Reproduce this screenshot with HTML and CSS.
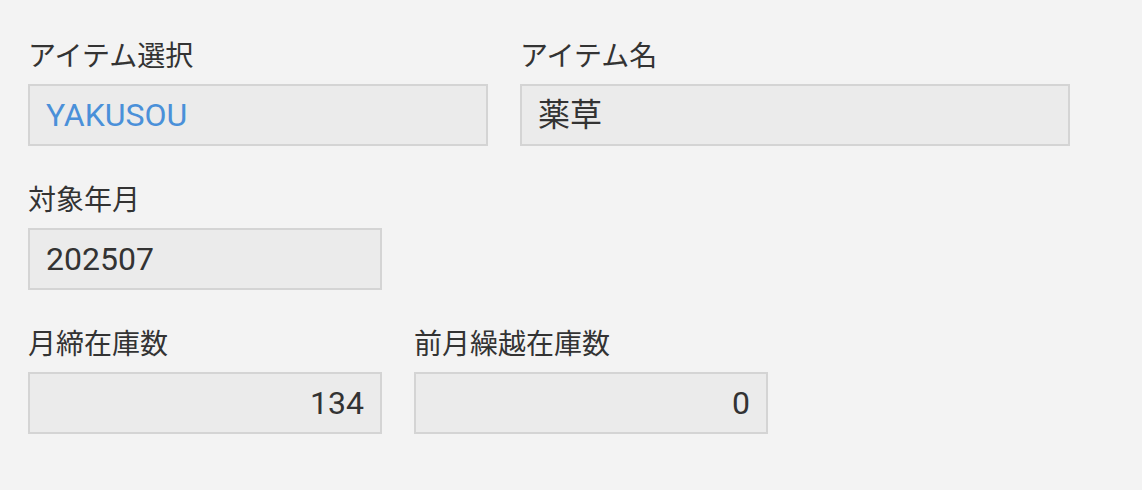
FILE: index.html
```html
<!DOCTYPE html>
<html lang="ja">
<head>
    <meta charset="UTF-8">
    <meta name="viewport" content="width=device-width, initial-scale=1.0">
    <title>在庫詳細</title>
    <link rel="stylesheet" href="styles.css">
</head>
<body>
    <div class="form">
        <div class="form-row">
            <div class="form-group w-select">
                <div class="form-label">アイテム選択</div>
                <div class="form-value link">YAKUSOU</div>
            </div>
            <div class="form-group w-name">
                <div class="form-label">アイテム名</div>
                <div class="form-value">薬草</div>
            </div>
        </div>

        <div class="form-row">
            <div class="form-group w-short">
                <div class="form-label">対象年月</div>
                <div class="form-value">202507</div>
            </div>
        </div>

        <div class="form-row">
            <div class="form-group w-short">
                <div class="form-label">月締在庫数</div>
                <div class="form-value number">134</div>
            </div>
            <div class="form-group w-short">
                <div class="form-label">前月繰越在庫数</div>
                <div class="form-value number">0</div>
            </div>
        </div>
    </div>
</body>
</html>
```

FILE: styles.css
```css
:root {
    --background-color: #f3f3f3;
    --field-background: #ebebeb;
    --border-color: #d4d4d4;
    --text-primary: #333333;
    --link-color: #4a90d9;
}

* {
    margin: 0;
    padding: 0;
    box-sizing: border-box;
}

body {
    font-family: "Noto Sans CJK JP", "Noto Sans", sans-serif;
    background-color: var(--background-color);
    color: var(--text-primary);
    padding: 34px 28px 0;
}

.form {
    display: flex;
    flex-direction: column;
    gap: 32px;
}

.form-row {
    display: flex;
    gap: 32px;
}

.w-select {
    width: 460px;
}

.w-name {
    width: 550px;
}

.w-short {
    width: 354px;
}

.form-label {
    font-size: 28px;
    line-height: 40px;
    margin-bottom: 10px;
}

.form-value {
    height: 62px;
    padding: 0 16px;
    border: 2px solid var(--border-color);
    background-color: var(--field-background);
    font-family: Roboto, "Noto Sans CJK JP", sans-serif;
    font-size: 32px;
    line-height: 58px;
    white-space: nowrap;
}

.form-value.link {
    color: var(--link-color);
}

.form-value.number {
    text-align: right;
}
```
